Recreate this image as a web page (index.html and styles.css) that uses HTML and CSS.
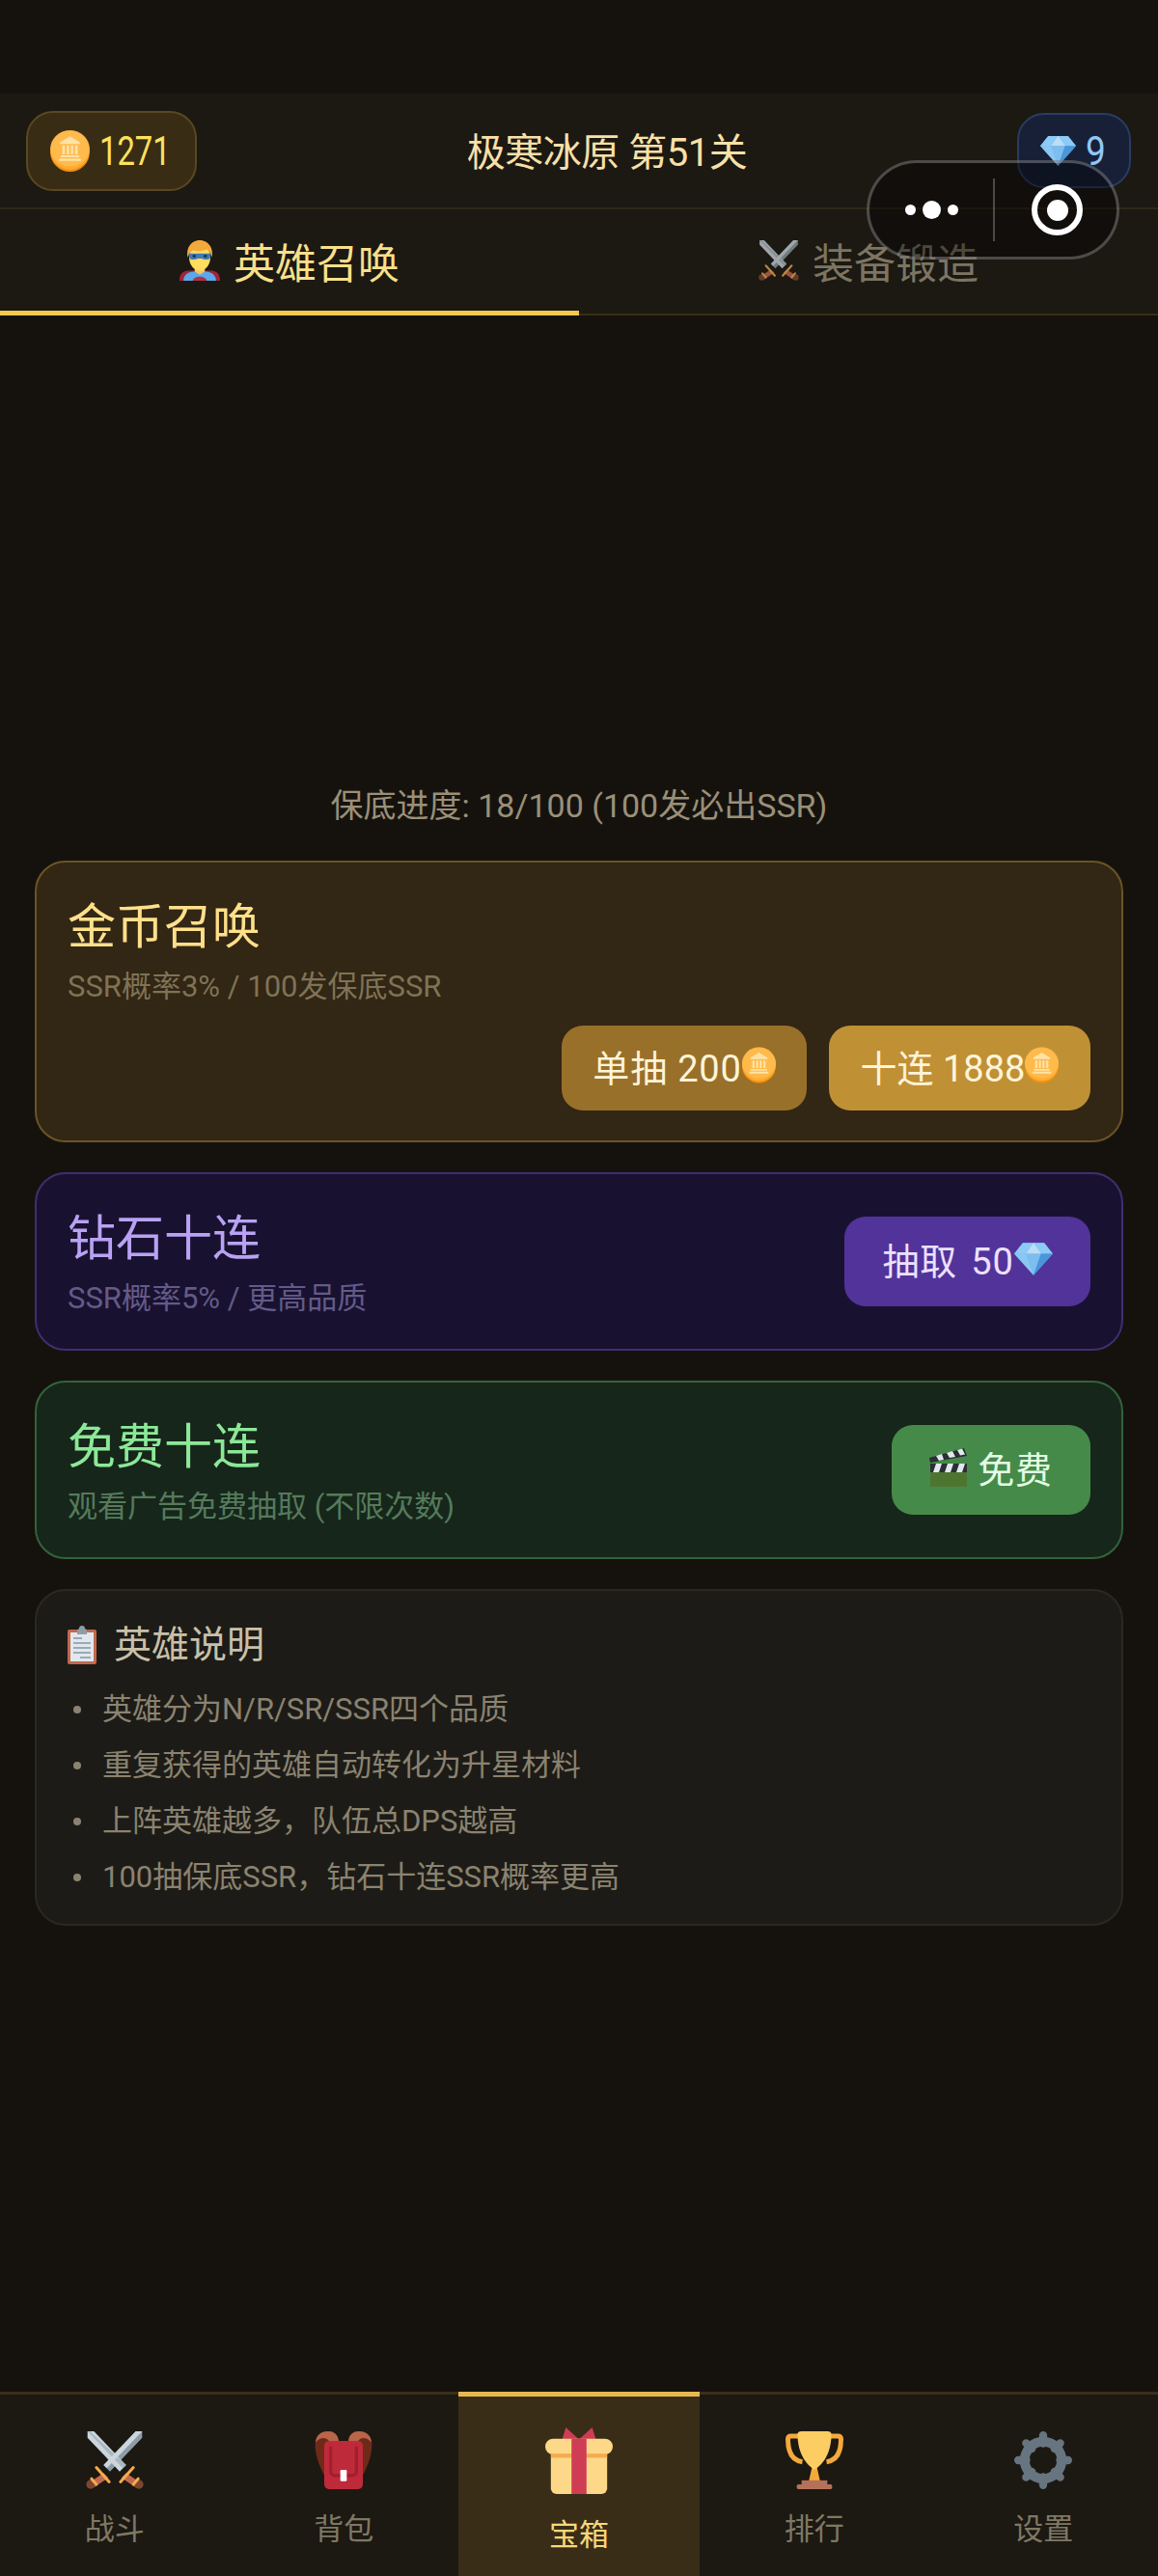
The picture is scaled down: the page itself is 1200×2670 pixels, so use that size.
FILE: index.html
```html
<!DOCTYPE html>
<html lang="zh-CN">
<head>
  <meta charset="UTF-8" />
  <meta name="viewport" content="width=device-width, initial-scale=1.0" />
  <title>英雄召唤</title>
  <link rel="stylesheet" href="styles.css">
</head>
<body>
  <!-- Shared icons -->
  <svg class="icon-defs" aria-hidden="true">
    <symbol id="i-coin" viewBox="0 0 36 38">
      <ellipse cx="18" cy="20" rx="18" ry="18" fill="#f4900c"/>
      <ellipse cx="18" cy="18" rx="18" ry="18" fill="#ffac33"/>
      <ellipse cx="18" cy="16.5" rx="18" ry="16.5" fill="#ffcc6a" opacity=".45"/>
      <path d="M18 5.5 27 11v1.5H9V11zM11 14h2.4v8H11zM15 14h2.2v8H15zM18.8 14H21v8h-2.2zM22.6 14H25v8h-2.4zM9.5 23h17v1.8h-17zM8 26h20v2H8z" fill="#ffe3a6"/>
    </symbol>
    <symbol id="i-gem" viewBox="0 0 36 30">
      <path d="M8 0h20l8 10-18 20L0 10z" fill="#5dadec"/>
      <path d="M8 0h20l8 10H0z" fill="#8ccaf7"/>
      <path d="M11 10 18 0l7 10z" fill="#bdddf4"/>
      <path d="M11 10h14l-7 20z" fill="#7dbdf0"/>
      <path d="M0 10h11l7 20z" fill="#9fd2f6" opacity=".7"/>
      <path d="M18 30 25 10h11z" fill="#4a96d8"/>
    </symbol>
    <symbol id="i-hero" viewBox="0 0 40 40">
      <path d="M0 40c0-7 3-9 8-10h24c5 1 8 3 8 10z" fill="#a0243a"/>
      <path d="M4 40c0-5 3-8 9-9h14c6 1 9 4 9 9z" fill="#5aa9ea"/>
      <path d="M13 40c1-3 4-4 7-4s6 1 7 4z" fill="#b03048"/>
      <path d="M15 27h10v4l-5 3-5-3z" fill="#f6c667"/>
      <ellipse cx="20" cy="17" rx="10.5" ry="13" fill="#ffdc5d"/>
      <path d="M8 17C6 6 13 0 20 0s14 6 12 17c-1-4-3-7-5-8-4 2-10 2-14 1-2 2-4 4-5 7z" fill="#f4a93c"/>
      <path d="M9 13h22l-1 5c-3 2-6 1-8 0h-4c-2 1-5 2-8 0z" fill="#3d7bb4"/>
      <rect x="13" y="14.5" width="3" height="2.4" fill="#17324d"/>
      <rect x="24" y="14.5" width="3" height="2.4" fill="#17324d"/>
    </symbol>
    <symbol id="i-swords" viewBox="0 0 36 36">
      <path d="M35 0v4L15 25l-4-4L31 0z" fill="#8d9ca6"/>
      <path d="M1 0h4l20 21-4 4L1 4z" fill="#ccd6dd"/>
      <path d="M1 0h1.5L25 21l-2 2z" fill="#aab8c2"/>
      <path d="M35 0h-4L11 21l2 2z" fill="#ccd6dd"/>
      <path d="m11 26 3 3-9 6-3-3z" fill="#c1694f"/>
      <path d="m25 26-3 3 9 6 3-3z" fill="#c1694f"/>
      <circle cx="3" cy="33" r="2.8" fill="#7a4630"/>
      <circle cx="33" cy="33" r="2.8" fill="#7a4630"/>
      <path d="m6.5 22.5 8 9M29.5 22.500l-8 9M3.500 29.500l3 3.500M32.500 29.500l-3 3.500" stroke="#f4ab4c" stroke-width="1.8" stroke-linecap="round"/>
    </symbol>
    <symbol id="i-pack" viewBox="0 0 36 36">
      <path d="M7 29C2 21-.5 11 .6 6 1.6 1.600 5 0 8.500 0 12 0 14.500 2 15 6H9.500C7.500 8 7 10 7 13zM29 29c5-8 7.500-18 6.400-23C34.400 1.600 31 0 27.500 0 24 0 21.500 2 21 6h5.500c2 2 2.500 4 2.500 7z" fill="#6e2a18"/>
      <path d="M.6 7C1 1.600 5 0 8.500 0 12 0 14.500 2 15 6H9C7 3.500 3.500 3.500.6 7zM35.400 7C35 1.600 31 0 27.500 0 24 0 21.500 2 21 6h6c2-2.500 5.500-2.500 8.400 1z" fill="#b8654a"/>
      <rect x="6" y="6" width="24" height="30" rx="3" fill="#bf2a3b"/>
      <path d="M10 9.500V25a2.500 2.500 0 0 0 2.500 2.500h11A2.500 2.500 0 0 0 26 25V9.500" fill="none" stroke="#a01f2e" stroke-width="2"/>
      <rect x="16" y="24" width="4" height="7" rx=".7" fill="#fff"/>
    </symbol>
    <symbol id="i-gift" viewBox="0 0 36 36">
      <path d="M9 7 11 0.500 17 6 18 7 19 6 25 0.500 27 7z" fill="#cf3d55"/>
      <path d="M3 15h30v18a3 3 0 0 1-3 3H6a3 3 0 0 1-3-3z" fill="#fdd888"/>
      <rect y="6.500" width="36" height="8.500" rx="4.250" fill="#fdd888"/>
      <rect x="3" y="14.500" width="30" height="2.200" fill="#f4ab4c"/>
      <rect x="14" y="6.500" width="8" height="29.500" fill="#cf3d55"/>
    </symbol>
    <symbol id="i-trophy" viewBox="0 0 36 36">
      <path d="M8 3H3.500Q1.500 3 1.500 5c0 7 2 13 9 14M28 3h4.500q2 0 2 2c0 7-2 13-9 14" fill="none" stroke="#f4a93c" stroke-width="3"/>
      <path d="M16.500 22h3l2 9h-7z" fill="#f4a93c"/>
      <path d="M7.500 2Q7.500 0 10 0h16q2.500 0 2.500 2C28.500 13 24 20 18 24 12 20 7.500 13 7.500 2z" fill="#fbcd62"/>
      <path d="M10 30.500h16v3H10z" fill="#b5705a"/>
      <rect x="7" y="33" width="22" height="3" rx="1" fill="#b5705a"/>
    </symbol>
    <symbol id="i-gear" viewBox="0 0 36 36">
      <g stroke="#66757f" stroke-width="5" stroke-linecap="round">
        <path d="M18 2.500v5M18 28.500v5M2.500 18h5M28.500 18h5M7.400 7.400l3.500 3.500M25.100 25.100l3.500 3.500M28.600 7.400l-3.500 3.500M10.900 25.100l-3.500 3.500"/>
      </g>
      <circle cx="18" cy="18" r="11.500" fill="none" stroke="#66757f" stroke-width="6"/>
    </symbol>
    <symbol id="i-clip" viewBox="0 0 30 40">
      <rect y="4" width="30" height="36" rx="2" fill="#c1694f"/>
      <rect x="3" y="7" width="24" height="30" fill="#e1e8ed"/>
      <path d="M10 9V6a3 3 0 0 1 2-3 3 3 0 0 1 6 0 3 3 0 0 1 2 3v3z" fill="#8e9ea8"/>
      <path d="M6 13h9M6 18h18M6 23h18M6 28h18M13 33h11" stroke="#99aab5" stroke-width="2"/>
    </symbol>
    <symbol id="i-clapper" viewBox="0 0 40 40">
      <rect x="1" y="25" width="38" height="15" rx="1" fill="#4e7530"/>
      <rect x="1" y="16" width="38" height="9" fill="#292f33"/>
      <path d="M7 16h6l-3 9H4zM19 16h6l-3 9h-6zM31 16h6l-3 9h-6z" fill="#e1e8ed"/>
      <path d="M0 10 36 0l3 8-38 7z" fill="#292f33"/>
      <path d="M7 8l6-2 2 6-5 1zM18 5l6-2 3 6-6 1zM29 2l5-1.500 3 6-5 1z" fill="#e1e8ed"/>
    </symbol>
  </svg>

  <div class="app">
    <div class="status-space"></div>

    <header class="topbar">
      <div class="pill pill-gold">
        <svg class="pill-icon"><use href="#i-coin"/></svg>
        <span>1271</span>
      </div>
      <div class="stage-name">极寒冰原 第51关</div>
      <div class="pill pill-gem">
        <svg class="pill-gem-icon"><use href="#i-gem"/></svg>
        <span>9</span>
      </div>
    </header>

    <nav class="tabs">
      <div class="tab tab-active">
        <svg class="tab-icon"><use href="#i-hero"/></svg>
        <span>英雄召唤</span>
      </div>
      <div class="tab">
        <svg class="tab-icon"><use href="#i-swords"/></svg>
        <span>装备锻造</span>
      </div>
    </nav>

    <!-- Mini program capsule sits over the header -->
    <div class="capsule">
      <div class="capsule-dots"><i></i><b></b><i></i></div>
      <div class="capsule-line"></div>
      <div class="capsule-close"><i></i></div>
    </div>

    <main class="summon-page">
      <p class="pity">保底进度: 18/100 (100发必出SSR)</p>

      <section class="card card-gold">
        <h2 class="card-title">金币召唤</h2>
        <p class="card-sub">SSR概率3% / 100发保底SSR</p>
        <div class="card-btns">
          <div class="btn btn-gold-dim">单抽 200<svg class="btn-coin"><use href="#i-coin"/></svg></div>
          <div class="btn btn-gold">十连 1888<svg class="btn-coin"><use href="#i-coin"/></svg></div>
        </div>
      </section>

      <section class="card card-row card-gem">
        <div class="card-text">
          <h2 class="card-title">钻石十连</h2>
          <p class="card-sub">SSR概率5% / 更高品质</p>
        </div>
        <div class="btn btn-tall btn-purple">抽取 50<svg class="btn-gem"><use href="#i-gem"/></svg></div>
      </section>

      <section class="card card-row card-free">
        <div class="card-text">
          <h2 class="card-title">免费十连</h2>
          <p class="card-sub">观看广告免费抽取 (不限次数)</p>
        </div>
        <div class="btn btn-tall btn-green"><svg class="btn-clapper"><use href="#i-clapper"/></svg>免费</div>
      </section>

      <section class="info">
        <h3 class="info-title"><svg class="info-icon"><use href="#i-clip"/></svg>英雄说明</h3>
        <ul class="info-list">
          <li>英雄分为N/R/SR/SSR四个品质</li>
          <li>重复获得的英雄自动转化为升星材料</li>
          <li>上阵英雄越多，队伍总DPS越高</li>
          <li>100抽保底SSR，钻石十连SSR概率更高</li>
        </ul>
      </section>
    </main>

    <footer class="bottom-nav">
      <div class="nav-item"><svg class="nav-icon"><use href="#i-swords"/></svg><span>战斗</span></div>
      <div class="nav-item"><svg class="nav-icon"><use href="#i-pack"/></svg><span>背包</span></div>
      <div class="nav-item nav-active"><svg class="nav-icon"><use href="#i-gift"/></svg><span>宝箱</span></div>
      <div class="nav-item"><svg class="nav-icon"><use href="#i-trophy"/></svg><span>排行</span></div>
      <div class="nav-item"><svg class="nav-icon"><use href="#i-gear"/></svg><span>设置</span></div>
    </footer>
  </div>
</body>
</html>
```

FILE: styles.css
```css
/* Reset */
* { box-sizing: border-box; margin: 0; padding: 0; }
html, body { height: 100%; }
body { font-family: Roboto, "Noto Sans CJK SC", sans-serif; background: #15120e; color: #fff; }
.icon-defs { position: absolute; width: 0; height: 0; }

.app { position: relative; height: 2670px; display: flex; flex-direction: column; overflow: hidden; }
.status-space { height: 97px; flex: none; }

/* Top bar */
.topbar { height: 120px; flex: none; display: flex; justify-content: space-between; align-items: center; padding: 0 28px 0 27px; background: #1c1812; border-bottom: 2px solid #2e2817; }
.pill { display: flex; align-items: center; border-radius: 28px; border: 2px solid; font-size: 42px; }
.pill span { transform-origin: left center; }
.pill-gold { width: 177px; height: 83px; padding-left: 23px; gap: 10px; background: #382c14; border-color: #5a4822; color: #fde25e; }
.pill-gold span { transform: scaleX(.78); }
.pill-gem { width: 118px; height: 78px; padding-left: 22px; gap: 10px; background: #182038; border-color: #293c62; color: #90c8f8; }
.pill-gem span { transform: scaleX(.88); }
.pill-icon { width: 41px; height: 43px; }
.pill-gem-icon { width: 37px; height: 31px; }
.stage-name { font-size: 40px; color: #f8e0a8; letter-spacing: -0.5px; margin-bottom: 2px; }

/* Tabs */
.tabs { height: 110px; flex: none; display: flex; background: #1c1812; border-bottom: 2px solid #3a2e14; }
.tab { flex: 1; display: flex; justify-content: center; align-items: center; gap: 14px; font-size: 43px; color: #7c7562; margin-bottom: -2px; border-bottom: 5px solid transparent; }
.tab .tab-icon { opacity: .75; }
.tab-active { color: #f8e08a; border-bottom-color: #f2c94f; }
.tab-active .tab-icon { opacity: 1; }
.tab-icon { width: 42px; height: 42px; }

/* Capsule */
.capsule { position: absolute; left: 898px; top: 166px; width: 262px; height: 103px; display: flex; align-items: center; border-radius: 52px; border: 3px solid rgba(255,255,255,.25); background: rgba(0,0,0,.38); }
.capsule-dots { width: 128px; display: flex; justify-content: center; align-items: center; gap: 7px; }
.capsule-dots i { width: 11px; height: 11px; border-radius: 50%; background: #fff; }
.capsule-dots b { width: 19px; height: 19px; border-radius: 50%; background: #fff; }
.capsule-line { width: 2px; height: 65px; background: rgba(255,255,255,.25); }
.capsule-close { width: 53px; height: 53px; margin-left: 38px; display: flex; justify-content: center; align-items: center; border-radius: 50%; border: 6px solid #fff; }
.capsule-close i { width: 22px; height: 22px; border-radius: 50%; background: #fff; }

/* Summon page */
.summon-page { flex: 1; padding: 484px 36px 0; }
.pity { font-size: 34px; line-height: 48px; text-align: center; color: #9a9078; margin-bottom: 33px; }

.card { border: 2px solid; border-radius: 32px; padding: 32px; margin-bottom: 31px; }
.card-row { height: 185px; padding-top: 0; padding-bottom: 0; display: flex; justify-content: space-between; align-items: center; }
.card-text { padding-top: 6px; }
.card-title { font-size: 50px; line-height: 70px; font-weight: 400; }
.card-sub { font-size: 31px; line-height: 54px; }

.card-gold { height: 292px; background: #322614; border-color: #6b5425; }
.card-gold .card-title { color: #ffe08a; }
.card-gold .card-sub { color: #7f7356; }
.card-gem { background: #181230; border-color: #3f2f70; }
.card-gem .card-title { color: #b9a2f4; }
.card-gem .card-sub { color: #645a88; }
.card-free { background: #16261a; border-color: #33633c; }
.card-free .card-title { color: #8ce898; }
.card-free .card-sub { color: #557a5c; }

.card-btns { display: flex; justify-content: flex-end; gap: 23px; margin-top: 13px; }
.btn { height: 88px; padding-bottom: 6px; display: flex; align-items: center; justify-content: center; border-radius: 22px; font-size: 38px; letter-spacing: 0.8px; }
.btn-tall { height: 93px; }
.btn-gold-dim { width: 254px; background: #99702a; color: #fff4d8; }
.btn-gold { width: 271px; background: #c09035; color: #fff4d8; letter-spacing: 0; }
.btn-purple { width: 255px; background: #52339a; color: #ece0ff; word-spacing: 4px; }
.btn-green { width: 206px; gap: 10px; background: #468a4a; color: #e4ffe4; }
.btn-coin { width: 35px; height: 38px; }
.btn-gem { width: 40px; height: 34px; }
.btn-clapper { width: 40px; height: 40px; }

/* Info box */
.info { height: 349px; padding: 27px 32px 0; background: #1d1b17; border: 2px solid #2a2823; border-radius: 32px; }
.info-title { display: flex; align-items: center; gap: 18px; font-size: 39px; line-height: 58px; font-weight: 400; color: #c8c0a8; margin-bottom: 9px; }
.info-icon { width: 30px; height: 40px; }
.info-list { list-style: none; padding-left: 6px; font-size: 31px; line-height: 58px; color: #8a8370; }
.info-list li { display: flex; align-items: center; gap: 22px; }
.info-list li::before { content: ""; width: 8px; height: 8px; border-radius: 50%; background: #8a8370; }

/* Bottom nav */
.bottom-nav { height: 191px; flex: none; display: flex; background: #1c1812; }
.nav-item { flex: 0 0 237.5px; display: flex; flex-direction: column; align-items: center; padding-top: 38px; border-top: 3px solid #3a2f1c; font-size: 31px; color: #7f7862; }
.nav-icon { width: 62px; height: 60px; margin-bottom: 19px; }
.nav-item span { line-height: 46px; }
.nav-active { flex: 0 0 250px; padding-top: 31px; border-top: 5px solid #e8b850; background: #3a2d18; color: #f8d878; }
.nav-active .nav-icon { width: 74px; height: 70px; margin-bottom: 20px; }
```
